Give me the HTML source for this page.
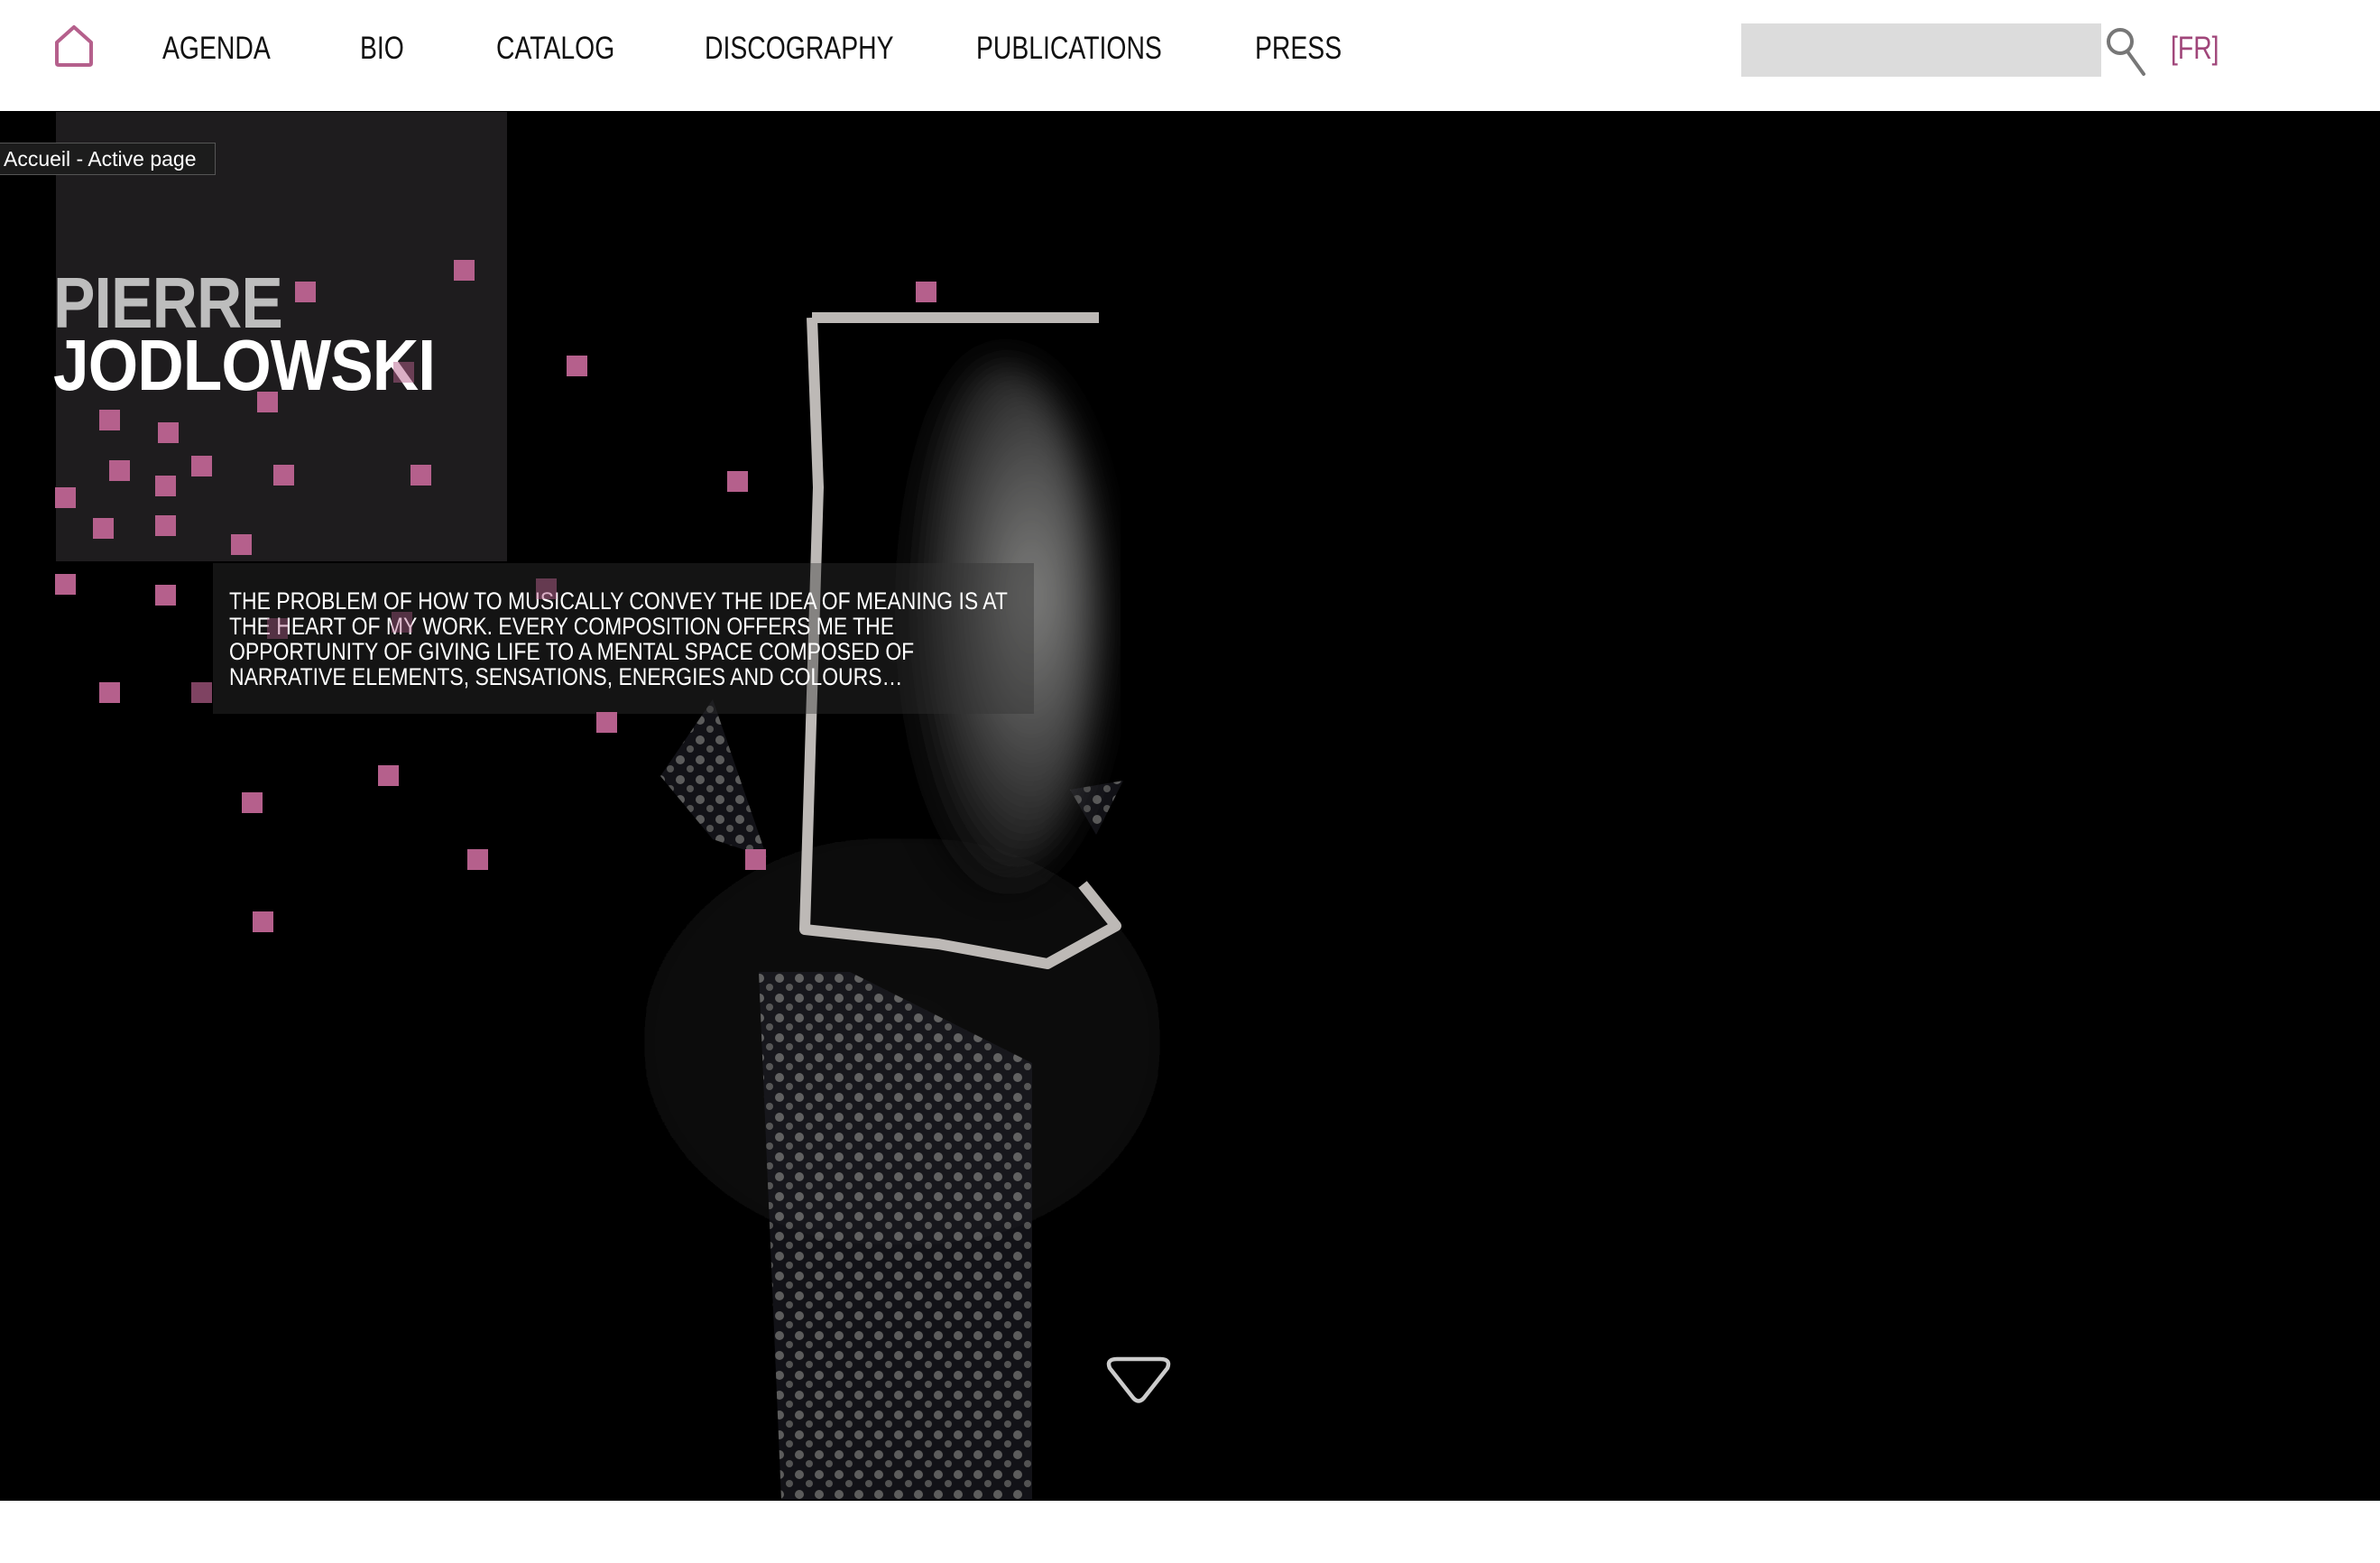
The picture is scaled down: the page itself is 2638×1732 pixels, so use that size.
<!DOCTYPE html>
<html><head><meta charset="utf-8"><style>
html,body{margin:0;padding:0;width:2638px;height:1732px;background:#fff;overflow:hidden;position:relative;font-family:"Liberation Sans",sans-serif}
.nav{position:absolute;top:32px;font-size:35px;color:#111;line-height:44px;transform:scaleX(.81);transform-origin:left;white-space:nowrap}
.hero{position:absolute;left:0;top:123px;width:2638px;height:1540px;background:#000;overflow:hidden}
.sq{position:absolute;width:23px;height:23px;background:#b5608c}
</style></head><body>
<svg style="position:absolute;left:59px;top:27px" width="46" height="48" viewBox="0 0 46 48"><path d="M23 3 L42 20 L42 43 Q42 45 40 45 L6 45 Q4 45 4 43 L4 20 Z" fill="none" stroke="#b5608c" stroke-width="4" stroke-linejoin="round"/></svg>
<div class="nav" style="left:180px">AGENDA</div>
<div class="nav" style="left:399px">BIO</div>
<div class="nav" style="left:550px">CATALOG</div>
<div class="nav" style="left:781px">DISCOGRAPHY</div>
<div class="nav" style="left:1082px">PUBLICATIONS</div>
<div class="nav" style="left:1391px">PRESS</div>
<div style="position:absolute;left:1930px;top:26px;width:399px;height:59px;background:#dcdcdc"></div>
<svg style="position:absolute;left:2333px;top:27px" width="60" height="58" viewBox="0 0 60 58"><circle cx="17" cy="19" r="13" fill="none" stroke="#777" stroke-width="4"/><path d="M25 30 L43 55" stroke="#777" stroke-width="4" stroke-linecap="round"/></svg>
<div class="nav" style="left:2406px;color:#a0467a">[FR]</div>

<div class="hero">
<svg width="2638" height="1540" viewBox="0 123 2638 1540" style="position:absolute;left:0;top:0">
<defs>
<radialGradient id="jk" cx="50%" cy="40%" r="60%"><stop offset="0" stop-color="#121212"/><stop offset="1" stop-color="#000" stop-opacity="0"/></radialGradient>
<radialGradient id="fc" cx="65%" cy="45%" r="60%"><stop offset="0" stop-color="#9a9a98"/><stop offset=".5" stop-color="#555"/><stop offset="1" stop-color="#0a0a0a"/></radialGradient>
<pattern id="dots" width="22" height="22" patternUnits="userSpaceOnUse"><rect width="22" height="22" fill="#1e1e26"/><circle cx="6" cy="6" r="5" fill="#9a9a9a"/><circle cx="17" cy="16" r="4" fill="#888"/></pattern>
<filter id="bl"><feGaussianBlur stdDeviation="40"/></filter>
<filter id="bl2"><feGaussianBlur stdDeviation="20"/></filter>
</defs>
<ellipse cx="1000" cy="1250" rx="600" ry="480" fill="url(#jk)" filter="url(#bl)"/>
<polygon points="841,1077 942,1077 1144,1178 1144,1662 866,1662" fill="url(#dots)" opacity=".6"/>
<polygon points="732,860 790,775 850,950 790,930" fill="url(#dots)" opacity=".6"/>
<polygon points="1186,875 1245,865 1215,925" fill="url(#dots)" opacity=".6"/>
<ellipse cx="1110" cy="690" rx="110" ry="290" fill="url(#fc)" filter="url(#bl2)" opacity=".85"/>
<path d="M900 352 L1218 352 M900 352 L907 540 L892 1030 L1040 1046 L1161 1068 L1237 1026 L1200 980" fill="none" stroke="#bdb9b6" stroke-width="12" stroke-linejoin="round"/>
<rect x="236" y="624" width="910" height="167" fill="#333" opacity=".4"/>
</svg>
</div>

<div style="position:absolute;left:62px;top:124px;width:500px;height:498px;background:#1e1c1e"></div>
<div style="position:absolute;left:0;top:158px;width:239px;height:36px;background:#1c1c1c;border:1px solid #555;border-left:none;color:#fff;font-size:23px;line-height:34px;padding-left:4px;box-sizing:border-box;white-space:nowrap">Accueil - Active page</div>
<div style="position:absolute;left:59px;top:296px;font-size:80px;font-weight:bold;color:#bdbdbd;line-height:80px;transform:scaleX(.87);transform-origin:left;letter-spacing:-1px">PIERRE</div>
<div style="position:absolute;left:59px;top:365px;font-size:80px;font-weight:bold;color:#fff;line-height:80px;transform:scaleX(.89);transform-origin:left;letter-spacing:-1px">JODLOWSKI</div>
<div style="position:absolute;left:254px;top:652px;white-space:nowrap;font-size:27px;line-height:28px;color:#fff;transform:scaleX(.85);transform-origin:left">THE PROBLEM OF HOW TO MUSICALLY CONVEY THE IDEA OF MEANING IS AT<br>THE HEART OF MY WORK. EVERY COMPOSITION OFFERS ME THE<br>OPPORTUNITY OF GIVING LIFE TO A MENTAL SPACE COMPOSED OF<br>NARRATIVE ELEMENTS, SENSATIONS, ENERGIES AND COLOURS…</div>

<div class="sq" style="left:503px;top:288px"></div>
<div class="sq" style="left:327px;top:312px"></div>
<div class="sq" style="left:1015px;top:312px"></div>
<div class="sq" style="left:628px;top:394px"></div>
<div class="sq" style="left:436px;top:401px;opacity:.5"></div>
<div class="sq" style="left:285px;top:434px"></div>
<div class="sq" style="left:110px;top:454px"></div>
<div class="sq" style="left:175px;top:468px"></div>
<div class="sq" style="left:121px;top:510px"></div>
<div class="sq" style="left:212px;top:505px"></div>
<div class="sq" style="left:303px;top:515px"></div>
<div class="sq" style="left:455px;top:515px"></div>
<div class="sq" style="left:172px;top:527px"></div>
<div class="sq" style="left:61px;top:540px"></div>
<div class="sq" style="left:806px;top:522px"></div>
<div class="sq" style="left:103px;top:574px"></div>
<div class="sq" style="left:172px;top:571px"></div>
<div class="sq" style="left:256px;top:592px"></div>
<div class="sq" style="left:61px;top:636px"></div>
<div class="sq" style="left:172px;top:648px"></div>
<div class="sq" style="left:594px;top:641px;opacity:.5"></div>
<div class="sq" style="left:296px;top:685px;opacity:.4"></div>
<div class="sq" style="left:434px;top:678px;opacity:.4"></div>
<div class="sq" style="left:110px;top:756px"></div>
<div class="sq" style="left:212px;top:756px;opacity:.7"></div>
<div class="sq" style="left:661px;top:789px"></div>
<div class="sq" style="left:419px;top:848px"></div>
<div class="sq" style="left:268px;top:878px"></div>
<div class="sq" style="left:518px;top:941px"></div>
<div class="sq" style="left:826px;top:941px"></div>
<div class="sq" style="left:280px;top:1010px"></div>

<svg style="position:absolute;left:1224px;top:1502px" width="76" height="56" viewBox="0 0 76 56"><path d="M14 4 L62 4 Q74 4 70 14 L44 47 Q38 54 32 47 L6 14 Q2 4 14 4 Z" fill="none" stroke="#ccc" stroke-width="4.5" stroke-linejoin="round"/></svg>
</body></html>
